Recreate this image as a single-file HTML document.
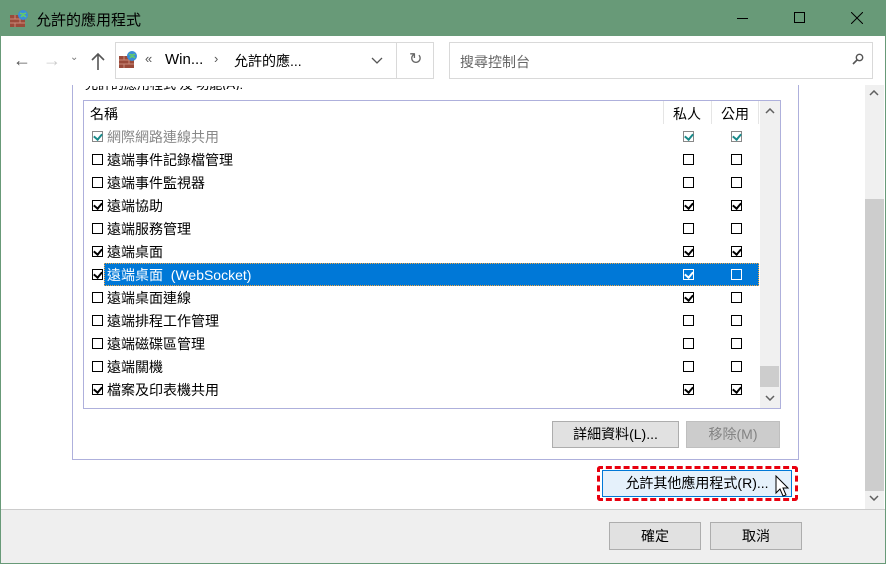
<!DOCTYPE html>
<html><head><meta charset="utf-8"><style>
*{box-sizing:border-box;margin:0;padding:0}
body{width:886px;height:564px;position:relative;overflow:hidden;background:#fff;font-family:"Liberation Sans","Noto Sans CJK TC",sans-serif;font-size:14px;color:#000}
.a{position:absolute}
.cb{position:absolute;width:11px;height:11px;border:1px solid #000;background:#fff}
.cb.k::after{content:"";position:absolute;left:2px;top:0px;width:4px;height:6px;border:solid #000;border-width:0 2px 2px 0;transform:rotate(40deg)}
.cb.g{border-color:#888}.cb.g::after{border-color:#1a8a8a}
.cb.w.k::after{border-color:#fff}
.row{position:absolute;left:84px;height:23px;width:676px}
.row .t{position:absolute;left:23px;top:2px;white-space:nowrap}
.btn{position:absolute;background:#e1e1e1;border:1px solid #adadad;text-align:center;font-size:14px;line-height:24px}
</style></head><body>
<div class="a" style="left:0;top:0;width:886px;height:36px;background:#689a78"></div>
<div class="a" style="left:0;top:0;width:1px;height:564px;background:#689a78"></div>
<div class="a" style="left:885px;top:0;width:1px;height:564px;background:#689a78"></div>
<div class="a" style="left:0;top:563px;width:886px;height:1px;background:#689a78"></div>
<svg class="a" style="left:9px;top:9px" width="20" height="20"><rect x="1" y="6" width="15" height="12" fill="#9a4a3a"/><path d="M1 10h15M1 14h15M6 6v4M11 10v4M6 14v4" stroke="#c98a7a" stroke-width="1"/><circle cx="14" cy="6" r="5" fill="#3a8ed8"/><path d="M11 4q3 2 6 0M12 8q2-3 5 0" stroke="#6c6" stroke-width="1.5" fill="none"/></svg>
<div class="a" style="left:36px;top:9px;font-size:15px;color:#000">允許的應用程式</div>
<div class="a" style="left:737px;top:18px;width:11px;height:1px;background:#000"></div>
<div class="a" style="left:794px;top:12px;width:11px;height:11px;border:1px solid #000"></div>
<svg class="a" style="left:851px;top:12px" width="12" height="12"><path d="M0 0L12 12M12 0L0 12" stroke="#000" stroke-width="1"/></svg>
<div class="a" style="left:13px;top:50px;font-size:18px;color:#555">&#8592;</div>
<div class="a" style="left:43px;top:50px;font-size:18px;color:#ccc">&#8594;</div>
<div class="a" style="left:70px;top:52px;font-size:10px;color:#777">&#8964;</div>
<svg class="a" style="left:91px;top:52px" width="14" height="18"><path d="M7 2V18M1 8L7 2L13 8" stroke="#555" stroke-width="1.6" fill="none"/></svg>
<div class="a" style="left:115px;top:42px;width:319px;height:37px;border:1px solid #d9d9d9"></div>
<div class="a" style="left:396px;top:43px;width:1px;height:35px;background:#d9d9d9"></div>
<svg class="a" style="left:118px;top:50px" width="20" height="20"><rect x="1" y="6" width="15" height="12" fill="#9a4a3a"/><path d="M1 10h15M1 14h15M6 6v4M11 10v4M6 14v4" stroke="#c98a7a"/><circle cx="14" cy="6" r="5" fill="#3a8ed8"/><path d="M11 4q3 2 6 0M12 8q2-3 5 0" stroke="#6c6" stroke-width="1.5" fill="none"/></svg>
<div class="a" style="left:145px;top:51px;color:#555;font-size:13px">«</div>
<div class="a" style="left:165px;top:51px;font-size:15px">Win...</div>
<div class="a" style="left:214px;top:51px;color:#555;font-size:13px">›</div>
<div class="a" style="left:234px;top:51px;font-size:14px">允許的應...</div>
<svg class="a" style="left:371px;top:57px" width="12" height="8"><path d="M1 1L6 6L11 1" stroke="#555" stroke-width="1.3" fill="none"/></svg>
<div class="a" style="left:409px;top:49px;color:#666;font-size:16px">↻</div>
<div class="a" style="left:449px;top:42px;width:424px;height:37px;border:1px solid #d9d9d9"></div>
<div class="a" style="left:460px;top:52px;color:#666;font-size:14px">搜尋控制台</div>
<svg class="a" style="left:852px;top:53px" width="12" height="12"><circle cx="7.5" cy="4.5" r="3.2" stroke="#555" stroke-width="1.4" fill="none"/><path d="M5 7L1 11" stroke="#555" stroke-width="1.6"/></svg>
<div class="a" style="left:865px;top:85px;width:19px;height:424px;background:#f0f0f0"></div>
<div class="a" style="left:865px;top:199px;width:19px;height:292px;background:#cdcdcd"></div>
<svg class="a" style="left:869px;top:90px" width="10" height="6"><path d="M1 5L5 1L9 5" stroke="#606060" stroke-width="1.5" fill="none"/></svg>
<svg class="a" style="left:869px;top:495px" width="10" height="6"><path d="M1 1L5 5L9 1" stroke="#606060" stroke-width="1.5" fill="none"/></svg>
<div class="a" style="left:72px;top:85px;width:727px;height:375px;border:1px solid #aeb0dc;border-top:none"></div>
<div class="a" style="left:85px;top:86px;height:4px;width:200px;overflow:hidden"><div style="position:absolute;top:-12px;left:0;font-size:13px;white-space:nowrap">允許的應用程式 及 功能(A):</div></div>
<div class="a" style="left:83px;top:100px;width:698px;height:309px;border:1px solid #aeb0dc;background:#fff"></div>
<div class="a" style="left:90px;top:104px">名稱</div>
<div class="a" style="left:663px;top:101px;width:1px;height:23px;background:#e5e5e5"></div>
<div class="a" style="left:711px;top:101px;width:1px;height:23px;background:#e5e5e5"></div>
<div class="a" style="left:758px;top:101px;width:1px;height:23px;background:#e5e5e5"></div>
<div class="a" style="left:673px;top:104px">私人</div>
<div class="a" style="left:721px;top:104px">公用</div>
<div class="a" style="left:760px;top:101px;width:20px;height:307px;background:#f0f0f0"></div>
<div class="a" style="left:760px;top:366px;width:19px;height:21px;background:#cdcdcd"></div>
<svg class="a" style="left:765px;top:108px" width="10" height="6"><path d="M1 5L5 1L9 5" stroke="#606060" stroke-width="1.5" fill="none"/></svg>
<svg class="a" style="left:765px;top:395px" width="10" height="6"><path d="M1 1L5 5L9 1" stroke="#606060" stroke-width="1.5" fill="none"/></svg>
<div class="a" style="left:104px;top:263px;width:655px;height:23px;background:#0078d7;outline:1px dotted #f4a640;outline-offset:-1px"></div>

<div class="row" style="top:125px"><div class="cb k g" style="left:8px;top:6px"></div><div class="t" style="color:#888">網際網路連線共用</div><div class="cb k g" style="left:599px;top:6px"></div><div class="cb k g" style="left:647px;top:6px"></div></div>
<div class="row" style="top:148px"><div class="cb" style="left:8px;top:6px"></div><div class="t">遠端事件記錄檔管理</div><div class="cb" style="left:599px;top:6px"></div><div class="cb" style="left:647px;top:6px"></div></div>
<div class="row" style="top:171px"><div class="cb" style="left:8px;top:6px"></div><div class="t">遠端事件監視器</div><div class="cb" style="left:599px;top:6px"></div><div class="cb" style="left:647px;top:6px"></div></div>
<div class="row" style="top:194px"><div class="cb k" style="left:8px;top:6px"></div><div class="t">遠端協助</div><div class="cb k" style="left:599px;top:6px"></div><div class="cb k" style="left:647px;top:6px"></div></div>
<div class="row" style="top:217px"><div class="cb" style="left:8px;top:6px"></div><div class="t">遠端服務管理</div><div class="cb" style="left:599px;top:6px"></div><div class="cb" style="left:647px;top:6px"></div></div>
<div class="row" style="top:240px"><div class="cb k" style="left:8px;top:6px"></div><div class="t">遠端桌面</div><div class="cb k" style="left:599px;top:6px"></div><div class="cb k" style="left:647px;top:6px"></div></div>
<div class="row" style="top:263px"><div class="cb k" style="left:8px;top:6px"></div><div class="t" style="color:#fff">遠端桌面&nbsp;&nbsp;(WebSocket)</div><div class="cb k w" style="left:599px;top:6px;border-color:#fff;background:transparent;"></div><div class="cb" style="left:647px;top:6px;border-color:#fff;background:transparent"></div></div>
<div class="row" style="top:286px"><div class="cb" style="left:8px;top:6px"></div><div class="t">遠端桌面連線</div><div class="cb k" style="left:599px;top:6px"></div><div class="cb" style="left:647px;top:6px"></div></div>
<div class="row" style="top:309px"><div class="cb" style="left:8px;top:6px"></div><div class="t">遠端排程工作管理</div><div class="cb" style="left:599px;top:6px"></div><div class="cb" style="left:647px;top:6px"></div></div>
<div class="row" style="top:332px"><div class="cb" style="left:8px;top:6px"></div><div class="t">遠端磁碟區管理</div><div class="cb" style="left:599px;top:6px"></div><div class="cb" style="left:647px;top:6px"></div></div>
<div class="row" style="top:355px"><div class="cb" style="left:8px;top:6px"></div><div class="t">遠端關機</div><div class="cb" style="left:599px;top:6px"></div><div class="cb" style="left:647px;top:6px"></div></div>
<div class="row" style="top:378px"><div class="cb k" style="left:8px;top:6px"></div><div class="t">檔案及印表機共用</div><div class="cb k" style="left:599px;top:6px"></div><div class="cb k" style="left:647px;top:6px"></div></div>

<div class="btn" style="left:552px;top:421px;width:127px;height:27px">詳細資料(L)...</div>
<div class="btn" style="left:686px;top:421px;width:94px;height:27px;background:#ccc;border-color:#bfbfbf;color:#838383">移除(M)</div>
<div class="a" style="left:597px;top:466px;width:201px;height:35px;border:3px dashed #e8000f;border-radius:3px"></div>
<div class="btn" style="left:602px;top:470px;width:190px;height:27px;background:#e5f1fb;border-color:#0078d7;padding-left:0px">允許其他應用程式(R)...</div>
<svg class="a" style="left:775px;top:475px" width="16" height="24"><path d="M1 1V18L5 14L8 21L11 20L8 13H13Z" fill="#fff" stroke="#000" stroke-width="1"/></svg>
<div class="a" style="left:1px;top:509px;width:884px;height:54px;background:#efefef;border-top:1px solid #ccc"></div>
<div class="btn" style="left:609px;top:522px;width:92px;height:28px;line-height:26px">確定</div>
<div class="btn" style="left:710px;top:522px;width:92px;height:28px;line-height:26px">取消</div>
</body></html>
